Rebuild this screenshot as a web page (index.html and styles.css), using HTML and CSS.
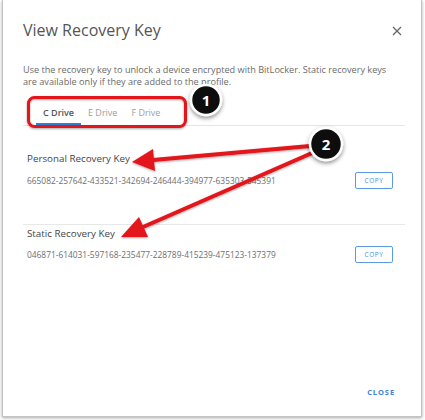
FILE: index.html
```html
<!DOCTYPE html>
<html>
<head>
<meta charset="utf-8">
<link rel="stylesheet" href="styles.css">
</head>
<body>
<div class="page">
  <div class="dialog">
    <div class="header">
      <div class="title">View Recovery Key</div>
      <svg class="close-x" width="10" height="10" viewBox="0 0 10 10"><path d="M1 1L9 9M9 1L1 9" stroke="#666" stroke-width="1.3" fill="none"/></svg>
    </div>
    <p class="desc">Use the recovery key to unlock a device encrypted with BitLocker. Static recovery keys are available only if they are added to the profile.</p>
    <div class="tabs">
      <div class="tab active">C Drive</div>
      <div class="tab">E Drive</div>
      <div class="tab">F Drive</div>
    </div>
    <div class="section first">
      <div class="sec-title">Personal Recovery Key</div>
      <div class="key-row">
        <span class="key">665082-257642-433521-342694-246444-394977-635303-545391</span>
        <span class="copy">COPY</span>
      </div>
    </div>
    <div class="section second">
      <div class="sec-title">Static Recovery Key</div>
      <div class="key-row">
        <span class="key">046871-614031-597168-235477-228789-415239-475123-137379</span>
        <span class="copy">COPY</span>
      </div>
    </div>
    <div class="footer">
      <span class="close-btn">CLOSE</span>
    </div>
  </div>
  <svg class="annot" width="425" height="420" viewBox="0 0 425 420">
    <defs>
      <filter id="sh" x="-20%" y="-20%" width="140%" height="140%">
        <feDropShadow dx="0" dy="1" stdDeviation="1.2" flood-color="#000" flood-opacity="0.35"/>
      </filter>
      <filter id="sh2" x="-40%" y="-40%" width="180%" height="180%">
        <feDropShadow dx="0" dy="2" stdDeviation="2" flood-color="#000" flood-opacity="0.45"/>
      </filter>
    </defs>
    <g filter="url(#sh)">
      <rect x="28.5" y="97.5" width="157" height="29" rx="6" ry="6" fill="none" stroke="#e3141b" stroke-width="3"/>
      <line x1="310" y1="146" x2="153" y2="160" stroke="#e3141b" stroke-width="4" stroke-linecap="round"/>
      <polygon points="132,162 155,171 153,149" fill="#e3141b"/>
      <line x1="312" y1="153" x2="143" y2="227" stroke="#e3141b" stroke-width="4" stroke-linecap="round"/>
      <polygon points="121,237 148,237 139,217" fill="#e3141b"/>
    </g>
    <g filter="url(#sh2)">
      <circle cx="206" cy="100" r="15" fill="#111" stroke="#fff" stroke-width="2.5"/>
      <circle cx="326" cy="144" r="16" fill="#111" stroke="#fff" stroke-width="2.5"/>
    </g>
    <text x="206" y="105.5" class="badge-num">1</text>
    <text x="326" y="149.5" class="badge-num">2</text>
  </svg>
</div>
</body>
</html>
```

FILE: styles.css
```css
html, body {
  margin: 0;
  padding: 0;
  background: #fff;
}
body {
  font-family: "Open Sans", "Liberation Sans", sans-serif;
}
.page {
  position: relative;
  width: 425px;
  height: 420px;
  overflow: hidden;
}
.dialog {
  box-sizing: border-box;
  margin-left: 2px;
  width: 420px;
  height: 417px;
  border: 1px solid #c4c4c4;
  border-top: 0;
  box-shadow: 0 1px 3px rgba(0, 0, 0, 0.35);
  background: #fff;
  padding: 0 16px 0 20px;
  display: flex;
  flex-direction: column;
}
.header {
  display: flex;
  align-items: center;
  justify-content: space-between;
  padding-top: 20px;
  height: 20px;
}
.title {
  font-size: 16px;
  line-height: 20px;
  color: #555;
}
.close-x {
  margin-right: 3px;
  margin-top: 1px;
}
.desc {
  margin: 24px 0 0;
  max-width: 372px;
  font-size: 9.15px;
  line-height: 12px;
  color: #6a6a6a;
}
.tabs {
  display: flex;
  margin-top: 13px;
  padding-left: 13px;
  border-bottom: 1px solid #e4e4e4;
}
.tab {
  padding: 6px 7px 4px;
  font-size: 9px;
  line-height: 12px;
  color: #a0a0a0;
  border-bottom: 2px solid transparent;
}
.tab.active {
  color: #555;
  font-weight: 600;
  border-bottom-color: #2f7fd6;
}
.section {
  padding-left: 4px;
}
.section.first {
  padding-top: 27px;
  padding-bottom: 35px;
  border-bottom: 1px solid #e8e8e8;
}
.section.second {
  padding-top: 3px;
}
.sec-title {
  font-size: 9.8px;
  line-height: 12px;
  color: #444;
}
.key-row {
  display: flex;
  align-items: center;
  justify-content: space-between;
  margin-top: 7px;
  padding-right: 12px;
}
.second .key-row {
  margin-top: 6px;
}
.key {
  font-size: 8.4px;
  color: #6e6e6e;
  line-height: 12px;
}
.copy {
  box-sizing: border-box;
  width: 38px;
  height: 17px;
  border: 1px solid #5d9be0;
  border-radius: 2px;
  color: #4a8fdc;
  font-size: 6.5px;
  letter-spacing: 0.6px;
  display: flex;
  align-items: center;
  justify-content: center;
}
.footer {
  margin-top: auto;
  display: flex;
  justify-content: flex-end;
  padding-right: 10px;
  padding-bottom: 18px;
}
.close-btn {
  font-size: 7.5px;
  line-height: 12px;
  font-weight: 700;
  letter-spacing: 0.9px;
  color: #3a84d6;
}
.annot {
  position: absolute;
  left: 0;
  top: 0;
  pointer-events: none;
}
.badge-num {
  font-family: "Open Sans", "Liberation Sans", sans-serif;
  font-weight: 700;
  font-size: 15px;
  fill: #fff;
  text-anchor: middle;
}
```
